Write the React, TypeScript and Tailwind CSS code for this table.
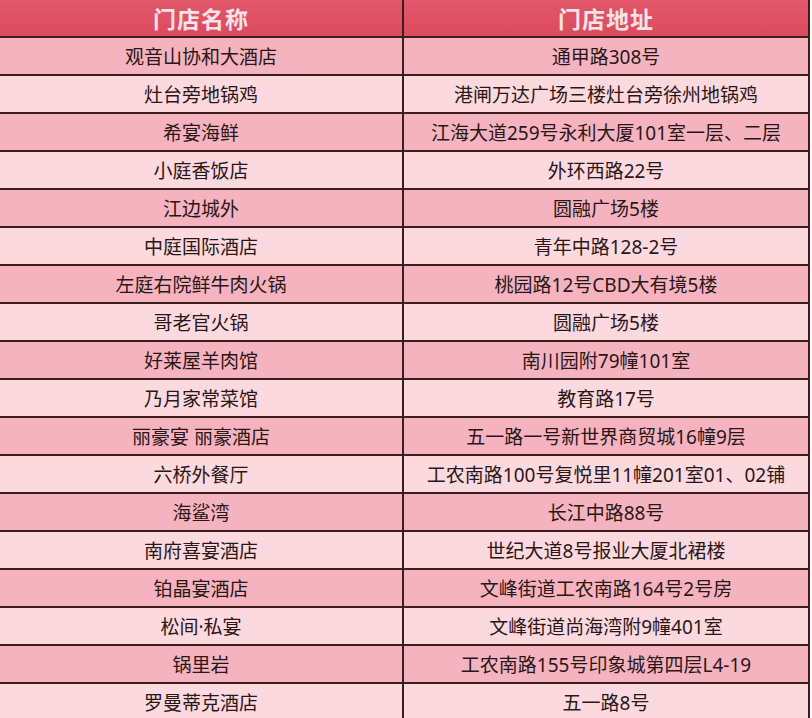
import * as React from 'react'

const rows: [string, string][] = [
  ['观音山协和大酒店', '通甲路308号'],
  ['灶台旁地锅鸡', '港闸万达广场三楼灶台旁徐州地锅鸡'],
  ['希宴海鲜', '江海大道259号永利大厦101室一层、二层'],
  ['小庭香饭店', '外环西路22号'],
  ['江边城外', '圆融广场5楼'],
  ['中庭国际酒店', '青年中路128-2号'],
  ['左庭右院鲜牛肉火锅', '桃园路12号CBD大有境5楼'],
  ['哥老官火锅', '圆融广场5楼'],
  ['好莱屋羊肉馆', '南川园附79幢101室'],
  ['乃月家常菜馆', '教育路17号'],
  ['丽豪宴 丽豪酒店', '五一路一号新世界商贸城16幢9层'],
  ['六桥外餐厅', '工农南路100号复悦里11幢201室01、02铺'],
  ['海鲨湾', '长江中路88号'],
  ['南府喜宴酒店', '世纪大道8号报业大厦北裙楼'],
  ['铂晶宴酒店', '文峰街道工农南路164号2号房'],
  ['松间·私宴', '文峰街道尚海湾附9幢401室'],
  ['锅里岩', '工农南路155号印象城第四层L4-19'],
  ['罗曼蒂克酒店', '五一路8号'],
]

export default function App() {
  return (
    <div className="h-[718px] w-[812px] overflow-hidden bg-white font-['Noto_Sans','Noto_Sans_CJK_SC',sans-serif]">
      <div className="w-[810px] border-r-2 border-[#3a1d1d]">
        <div className="grid h-[38px] grid-cols-[404px_1fr] border-b-2 border-[#3a1d1d] bg-gradient-to-b from-[#e3586c] to-[#db4a5e] text-[23px] font-bold tracking-[1px] text-[#fbe3e7]">
          <div className="flex items-center justify-center border-r-2 border-[#3a1d1d] pt-[2px]">门店名称</div>
          <div className="flex items-center justify-center pt-[2px]">门店地址</div>
        </div>
        {rows.map(([name, addr], i) => (
          <div
            key={name}
            className={`grid h-[38px] grid-cols-[404px_1fr] border-b-2 border-[#3a1d1d] text-[19px] text-[#2b1616] ${
              i % 2 === 0 ? 'bg-[#f4b3be]' : 'bg-[#fbd9de]'
            }`}
          >
            <div className="flex items-center justify-center border-r-2 border-[#3a1d1d] pt-[3px]">{name}</div>
            <div className="flex items-center justify-center whitespace-nowrap pt-[3px]">{addr}</div>
          </div>
        ))}
      </div>
    </div>
  )
}
